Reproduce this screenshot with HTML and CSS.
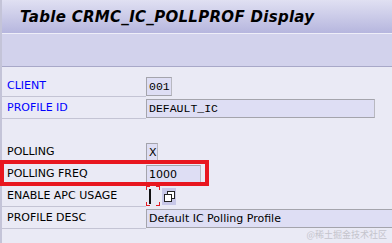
FILE: index.html
```html
<!DOCTYPE html>
<html>
<head>
<meta charset="utf-8">
<link rel="stylesheet" href="styles.css">
</head>
<body>
<div class="screen">
  <div class="titlebar"><h1 class="title">Table CRMC_IC_POLLPROF Display</h1></div>
  <div class="toolbar"></div>
  <div class="form">
    <div class="row"><div class="label key">CLIENT</div><div class="cell"><span class="field mono w-client">001</span></div></div>
    <div class="row"><div class="label key">PROFILE ID</div><div class="cell"><span class="field mono w-profile">DEFAULT_IC</span></div></div>
    <div class="row blank"></div>
    <div class="row"><div class="label">POLLING</div><div class="cell"><span class="field w-x">X</span></div></div>
    <div class="row"><div class="label">POLLING FREQ</div><div class="cell"><span class="field w-freq">1000</span></div></div>
    <div class="row"><div class="label">ENABLE APC USAGE</div><div class="cell"><span class="focus"><span class="caret"></span></span><span class="copybtn"><svg width="11" height="11" viewBox="0 0 11 11"><rect x="3.5" y="0.5" width="7" height="7" fill="#fff" stroke="#222"/><rect x="0.5" y="3.5" width="7" height="7" fill="#fff" stroke="#222"/></svg></span></div></div>
    <div class="row"><div class="label">PROFILE DESC</div><div class="cell"><span class="field w-desc">Default IC Polling Profile</span></div></div>
    <div class="highlight"></div>
  </div>
  <div class="watermark">@稀土掘金技术社区</div>
</div>
</body>
</html>
```
FILE: styles.css
```css
html, body {
  margin: 0;
  padding: 0;
}
body {
  width: 392px;
  height: 243px;
  overflow: hidden;
  background: #eaeaf5;
  font-family: "DejaVu Sans", sans-serif;
}
.screen {
  position: relative;
  height: 243px;
  border-left: 2px solid #c4c4d8;
  box-sizing: border-box;
}
.titlebar {
  height: 33px;
  background: linear-gradient(#e0e0f2, #b6b6de);
  border-bottom: 1px solid #eeeef8;
  display: flex;
  align-items: center;
  padding-left: 18px;
}
.title {
  margin: 0;
  font-family: "DejaVu Sans", sans-serif;
  font-weight: bold;
  font-style: italic;
  font-size: 15px;
  color: #000;
  letter-spacing: 0.3px;
}
.toolbar {
  height: 32px;
  background: #d2d2ec;
  border-bottom: 1px solid #a8a8c8;
}
.form {
  position: relative;
  padding-top: 8px;
}
.row {
  display: grid;
  grid-template-columns: 144px 1fr;
  height: 22px;
}
.label {
  display: flex;
  align-items: center;
  padding-left: 5px;
  font-size: 11px;
  color: #000;
  border-bottom: 1px solid #c4c4d4;
  box-sizing: border-box;
  height: 22px;
}
.label.key {
  color: #0000ff;
}
.blank {
  border: none;
}
.cell {
  display: flex;
  align-items: center;
  gap: 2px;
}
.field {
  box-sizing: border-box;
  height: 19px;
  border: 1px solid #a4a4ac;
  border-right-color: #b8b8c0;
  background: #dedef4;
  display: flex;
  align-items: center;
  padding-left: 2px;
  font-size: 11px;
  color: #000;
  white-space: nowrap;
  overflow: hidden;
}
.mono {
  font-family: "Liberation Mono", monospace;
  font-size: 11.5px;
}
.w-client { width: 26px; }
.w-profile { width: 229px; }
.w-x { width: 12px; }
.w-freq { width: 55px; }
.w-desc { width: 246px; border-right: none; }
.focus {
  width: 14px;
  height: 20px;
  box-sizing: border-box;
  display: flex;
  align-items: center;
  padding-left: 3px;
  background:
    linear-gradient(#e21c24, #e21c24) left top / 4px 1px no-repeat,
    linear-gradient(#e21c24, #e21c24) left top / 1px 4px no-repeat,
    linear-gradient(#e21c24, #e21c24) right top / 4px 1px no-repeat,
    linear-gradient(#e21c24, #e21c24) right top / 1px 4px no-repeat,
    linear-gradient(#e21c24, #e21c24) left bottom / 4px 1px no-repeat,
    linear-gradient(#e21c24, #e21c24) left bottom / 1px 4px no-repeat,
    linear-gradient(#e21c24, #e21c24) right bottom / 4px 1px no-repeat,
    linear-gradient(#e21c24, #e21c24) right bottom / 1px 4px no-repeat;
}
.caret {
  width: 2px;
  height: 15px;
  background: #111;
}
.copybtn {
  width: 14px;
  height: 17px;
  background: #c8c8e8;
  display: flex;
  align-items: center;
  justify-content: center;
}
.highlight {
  position: absolute;
  left: -2px;
  top: 93px;
  width: 209px;
  height: 26px;
  border: 4px solid #e8161f;
  box-sizing: border-box;
  pointer-events: none;
}
.watermark {
  position: absolute;
  right: 5px;
  bottom: 2px;
  font-family: "Noto Sans CJK SC", sans-serif;
  font-size: 9px;
  color: #c4c4cc;
}
```
